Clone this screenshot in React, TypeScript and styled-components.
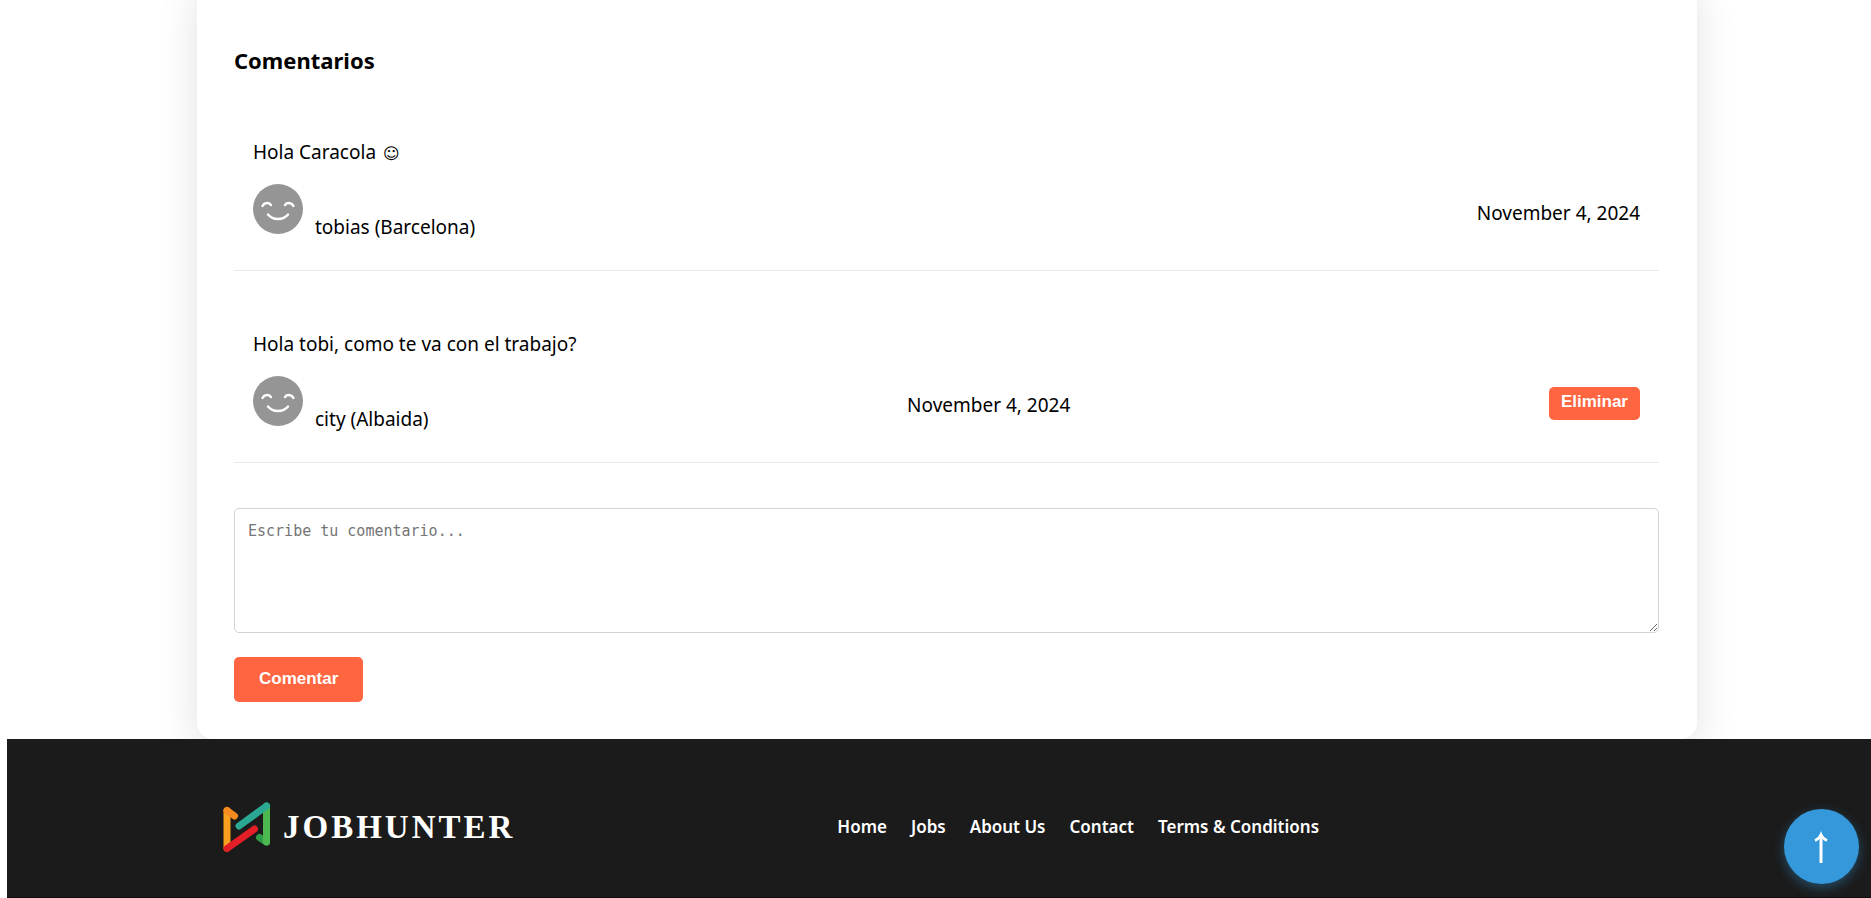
import React from "react";
import styled, { createGlobalStyle } from "styled-components";

const GlobalStyle = createGlobalStyle`
  * { box-sizing: border-box; }
  body {
    margin: 0;
    background: #ffffff;
    color: #000000;
    font-family: "Segoe UI", "Noto Sans", "DejaVu Sans", sans-serif;
    font-size: 19px;
    line-height: 30px;
  }
`;

const Page = styled.div`
  display: flex;
  flex-direction: column;
  min-height: 100vh;
  padding-left: 7px;
  overflow: hidden;
`;

const Main = styled.main`
  display: flex;
  justify-content: center;
  padding-left: 16px;
`;

const Card = styled.section`
  flex: 1;
  max-width: 1500px;
  margin-top: -20px;
  padding: 62px 38px 37px 37px;
  border-radius: 16px;
  background: #ffffff;
  box-shadow: 0 10px 40px rgba(0, 0, 0, 0.12);
`;

const Title = styled.h2`
  margin: 0;
  font-size: 22px;
  line-height: 36px;
  font-weight: 700;
`;

const CommentList = styled.ul`
  margin: 1px 0 45px;
  padding: 0;
  list-style: none;
`;

const Comment = styled.li`
  padding: 58px 19px 28px;
  border-bottom: 1px solid #e9e9e9;
`;

const CommentText = styled.p`
  margin: 0 0 17px;
`;

const Emoji = styled.span`
  margin-left: 2px;
  font-family: "DejaVu Sans", sans-serif;
  font-size: 16px;
  line-height: 1;
`;

const Meta = styled.div`
  display: flex;
  align-items: center;
  justify-content: space-between;
  height: 58px;
`;

const Author = styled.div`
  display: flex;
  align-items: baseline;
  align-self: flex-start;
  gap: 12px;
`;

const Avatar = styled.svg`
  flex: none;
  width: 50px;
  height: 50px;
`;

const Button = styled.button<{ $small?: boolean }>`
  display: block;
  height: ${(p) => (p.$small ? 33 : 45)}px;
  margin-bottom: ${(p) => (p.$small ? 4 : 0)}px;
  padding: 0 ${(p) => (p.$small ? 12 : 25)}px 2px;
  border: 0;
  border-radius: 5px;
  background: #ff6540;
  color: #ffffff;
  font-family: Arial, "Liberation Sans", sans-serif;
  font-size: 17px;
  font-weight: 700;
  cursor: pointer;
`;

const Field = styled.textarea`
  display: block;
  width: 100%;
  height: 125px;
  margin-bottom: 24px;
  padding: 12px 13px;
  border: 1px solid #ced4da;
  border-radius: 5px;
  background: #ffffff;
  font-family: Consolas, "DejaVu Sans Mono", monospace;
  font-size: 15px;
  line-height: 20px;
  resize: vertical;
  &::placeholder { color: #757575; }
`;

const Footer = styled.footer`
  flex: 1;
  display: flex;
  justify-content: center;
  padding: 58px 0 40px 16px;
  border-bottom: 1px solid #120c12;
  background: #1b1b1b;
  color: #ffffff;
`;

const FooterInner = styled.div`
  flex: 1;
  display: grid;
  grid-template-columns: minmax(300px, 5fr) 7fr;
  align-items: center;
  align-self: flex-start;
  max-width: 1500px;
  padding: 0 20px;
`;

const Brand = styled.a`
  display: flex;
  align-items: center;
  gap: 6px;
  color: inherit;
  text-decoration: none;
  font-family: "Liberation Serif", serif;
  font-size: 33px;
  font-weight: 700;
  letter-spacing: 3px;
`;

const Logo = styled.svg`
  flex: none;
  width: 60px;
  height: 60px;
`;

const Nav = styled.nav`
  display: flex;
  flex-wrap: wrap;
  gap: 0 24px;
  padding-left: 12px;
`;

const NavLink = styled.a`
  color: inherit;
  font-size: 17px;
  font-weight: 600;
  text-decoration: none;
`;

const ToTop = styled.button`
  position: fixed;
  right: 12px;
  bottom: 14px;
  display: flex;
  align-items: center;
  justify-content: center;
  width: 75px;
  height: 75px;
  padding: 0;
  border: 0;
  border-radius: 50%;
  background: #3498db;
  box-shadow: 0 4px 12px rgba(52, 152, 219, 0.4);
  color: #ffffff;
  cursor: pointer;
`;

const comments = [
  { text: "Hola Caracola", emoji: "☺", author: "tobias (Barcelona)", date: "November 4, 2024", own: false },
  { text: "Hola tobi, como te va con el trabajo?", emoji: "", author: "city (Albaida)", date: "November 4, 2024", own: true },
];

const links = ["Home", "Jobs", "About Us", "Contact", "Terms & Conditions"];

function Face() {
  return (
    <Avatar viewBox="0 0 50 50" aria-hidden="true">
      <circle cx="25" cy="25" r="25" fill="#959595" />
      <g fill="none" stroke="#ffffff" strokeWidth="2.4" strokeLinecap="round">
        <path d="M9.500 22c1.600-3.600 6.400-3.800 8.400-1" />
        <path d="M32 21c2-2.800 6.800-2.600 8.400 1" />
        <path d="M15 30.500c5 6 15 6 20 0" />
      </g>
    </Avatar>
  );
}

export default function App() {
  return (
    <>
      <GlobalStyle />
      <Page>
        <Main>
          <Card>
            <Title>Comentarios</Title>
            <CommentList>
              {comments.map((c) => (
                <Comment key={c.author}>
                  <CommentText>
                    {c.text} {c.emoji && <Emoji>{c.emoji}</Emoji>}
                  </CommentText>
                  <Meta>
                    <Author>
                      <Face />
                      <span>{c.author}</span>
                    </Author>
                    <time>{c.date}</time>
                    {c.own && <Button type="button" $small>Eliminar</Button>}
                  </Meta>
                </Comment>
              ))}
            </CommentList>
            <form onSubmit={(e) => e.preventDefault()}>
              <Field aria-label="Comentario" placeholder="Escribe tu comentario..." />
              <Button type="submit">Comentar</Button>
            </form>
          </Card>
        </Main>
        <Footer>
          <FooterInner>
            <Brand href="#">
              <Logo viewBox="0 0 60 60" aria-hidden="true">
                <g fill="none" strokeWidth="7" strokeLinecap="round" strokeLinejoin="round">
                  <path d="M10 51V13.500" stroke="#f9a01f" />
                  <path d="M10 13.500L17.500 19" stroke="#f58a1f" />
                  <path d="M49.500 45L42.500 40.500" stroke="#2f9a48" />
                  <path d="M49.500 9V45" stroke="#4cb84f" />
                  <path d="M22 29L49.500 9" stroke="#2aa894" />
                  <path d="M10 51.500L37.500 32" stroke="#e31e26" />
                </g>
              </Logo>
              <span>JOBHUNTER</span>
            </Brand>
            <Nav>
              {links.map((l) => (
                <NavLink key={l} href="#">{l}</NavLink>
              ))}
            </Nav>
          </FooterInner>
        </Footer>
        <ToTop type="button" aria-label="Volver arriba">
          <svg width="21" height="36" viewBox="0 0 21 36" fill="none" stroke="currentColor" aria-hidden="true">
            <path d="M10 34V6" strokeWidth="3" />
            <path d="M4 11.500Q8.500 9.500 10 5.500Q11.500 9.500 16 11.500" strokeWidth="2.500" />
          </svg>
        </ToTop>
      </Page>
    </>
  );
}
